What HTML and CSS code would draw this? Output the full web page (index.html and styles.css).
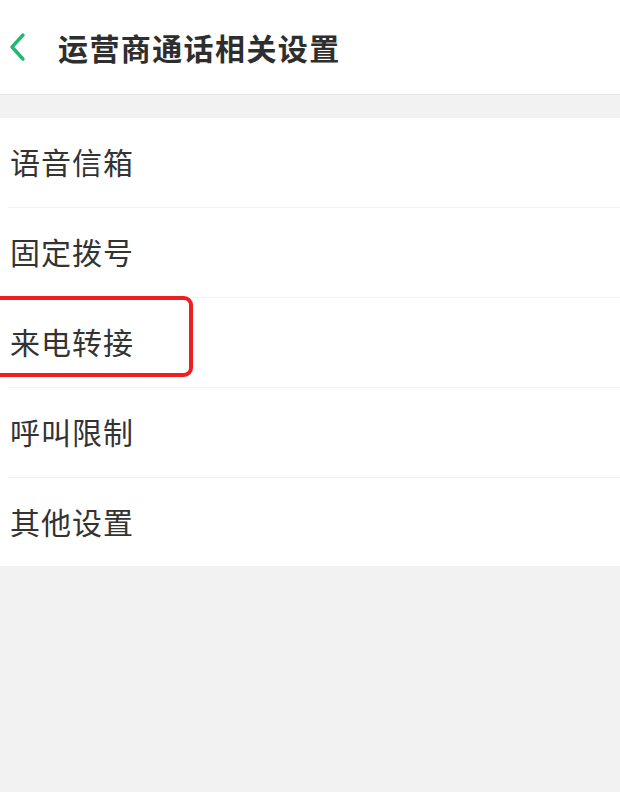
FILE: index.html
```html
<!DOCTYPE html>
<html lang="zh-CN">
<head>
<meta charset="utf-8">
<title>运营商通话相关设置</title>
<link rel="stylesheet" href="styles.css">
</head>
<body>
<header class="topbar">
  <svg class="back" width="20" height="30" viewBox="0 0 20 30" aria-hidden="true">
    <path d="M15 3 L4 15 L15 27" fill="none" stroke="#22b873" stroke-width="3.4" stroke-linecap="round" stroke-linejoin="round"/>
  </svg>
  <h1 class="title">运营商通话相关设置</h1>
</header>
<ul class="list">
  <li class="item">语音信箱</li>
  <li class="item">固定拨号</li>
  <li class="item item-marked">来电转接<span class="mark"></span></li>
  <li class="item">呼叫限制</li>
  <li class="item">其他设置</li>
</ul>
</body>
</html>
```

FILE: styles.css
```css
* { box-sizing: border-box; }
html, body {
  margin: 0;
  padding: 0;
  background: #f2f2f2;
  font-family: "Noto Sans CJK SC", "Noto Sans", sans-serif;
  overflow: hidden;
}
.topbar {
  height: 95px;
  background: #fff;
  border-bottom: 1px solid #e4e4e4;
  display: flex;
  align-items: center;
  padding-left: 8px;
}
.back {
  display: block;
}
.title {
  margin: 0 0 0 30px;
  font-size: 30px;
  font-weight: bold;
  color: #2e2e2e;
  letter-spacing: 1.4px;
  line-height: 1;
}
.list {
  list-style: none;
  margin: 23px 0 0 0;
  padding: 0 0 0 8px;
  background: #fff;
}
.item {
  position: relative;
  height: 90px;
  display: flex;
  align-items: center;
  padding-left: 2px;
  padding-bottom: 3px;
  font-size: 30px;
  color: #333;
  letter-spacing: 1px;
  border-bottom: 1px solid #f1f1f1;
}
.item:last-child {
  border-bottom: none;
  height: 88px;
}
.mark {
  position: absolute;
  left: -30px;
  top: -2px;
  width: 215px;
  height: 81px;
  border: 4px solid #f01e1e;
  border-radius: 9px;
}
```
